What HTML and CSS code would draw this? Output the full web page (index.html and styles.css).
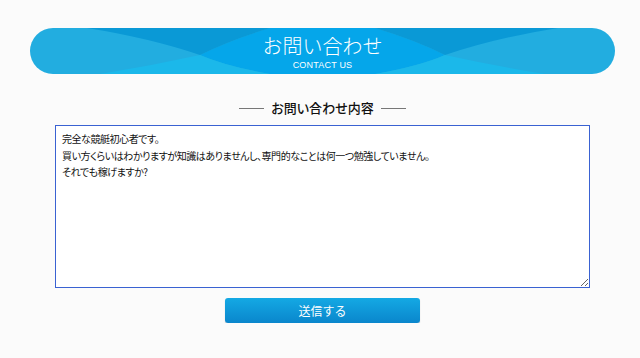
FILE: index.html
```html
<!DOCTYPE html>
<html lang="ja">
<head>
    <meta charset="UTF-8">
    <meta name="viewport" content="width=device-width, initial-scale=1.0">
    <title>お問い合わせ</title>
    <link rel="stylesheet" href="styles.css">
</head>
<body>
    <div class="page">
        <div class="banner">
            <svg class="banner-bg" viewBox="0 0 585 46" preserveAspectRatio="none">
                <rect width="585" height="46" fill="#22ade0"/>
                <path d="M170,27 Q200,12 240,0 L345,0 Q385,12 415,27 Q390,38 345,46 L240,46 Q195,38 170,27 Z" fill="#05a6ea"/>
                <path d="M57,0 Q120,10 170,27 Q200,12 240,0 Z" fill="#0a99d6"/>
                <path d="M70,46 Q120,38 170,27 Q195,38 240,46 Z" fill="#1bb8ea"/>
                <path d="M528,0 Q465,10 415,27 Q385,12 345,0 Z" fill="#0a99d6"/>
                <path d="M515,46 Q465,38 415,27 Q390,38 345,46 Z" fill="#1bb8ea"/>
            </svg>
            <div class="banner-title">お問い合わせ</div>
            <div class="banner-sub">CONTACT US</div>
        </div>

        <h2 class="section-title"><span class="rule"></span>お問い合わせ内容<span class="rule"></span></h2>

        <form class="contact-form">
            <textarea class="message" name="message">完全な競艇初心者です。
買い方くらいはわかりますが知識はありませんし、専門的なことは何一つ勉強していません。
それでも稼げますか?</textarea>
            <button type="button" class="submit">送信する</button>
        </form>
    </div>
</body>
</html>
```

FILE: styles.css
```css
body {
    margin: 0;
    background-color: #fbfbfb;
    font-family: "Noto Sans CJK JP", "Noto Sans", sans-serif;
    color: #222;
}
.page {
    width: 585px;
    margin: 0 0 0 30px;
    padding-top: 28px;
}
.banner {
    position: relative;
    height: 46px;
    border-radius: 23px;
    overflow: hidden;
    display: flex;
    flex-direction: column;
    align-items: center;
    color: #fff;
}
.banner-bg {
    position: absolute;
    top: 0;
    left: 0;
    width: 100%;
    height: 100%;
}
.banner-title {
    position: relative;
    font-size: 20px;
    line-height: 22px;
    margin-top: 7px;
    font-weight: 300;
}
.banner-sub {
    position: relative;
    font-family: "Liberation Sans", Arial, sans-serif;
    font-size: 9px;
    line-height: 10px;
    margin-top: 3px;
    letter-spacing: 0.2px;
}
.section-title {
    display: flex;
    justify-content: center;
    align-items: center;
    gap: 7px;
    margin: 26px 0 0;
    font-size: 13px;
    line-height: 16px;
    font-weight: 500;
    color: #111;
    font-feature-settings: "palt";
}
.rule {
    width: 25px;
    height: 1px;
    background-color: #777;
}
.contact-form {
    display: flex;
    flex-direction: column;
    align-items: center;
    margin-top: 9px;
}
.message {
    box-sizing: border-box;
    width: 535px;
    height: 163px;
    margin: 0;
    padding: 5px 6px;
    border: 1px solid #3a62d2;
    background-color: #fff;
    font-family: "Noto Sans CJK JP", sans-serif;
    font-size: 10px;
    line-height: 16.5px;
    letter-spacing: -0.45px;
    color: #111;
    font-feature-settings: "palt";
    outline: none;
}
.submit {
    width: 195px;
    height: 25px;
    margin-top: 10px;
    border: none;
    border-radius: 3px;
    background: linear-gradient(#14a9e4, #0a86cc);
    box-shadow: 0 1px 1px rgba(0, 0, 0, 0.25);
    color: #fff;
    font-family: "Noto Sans CJK JP", sans-serif;
    font-size: 12px;
    cursor: pointer;
}
```
